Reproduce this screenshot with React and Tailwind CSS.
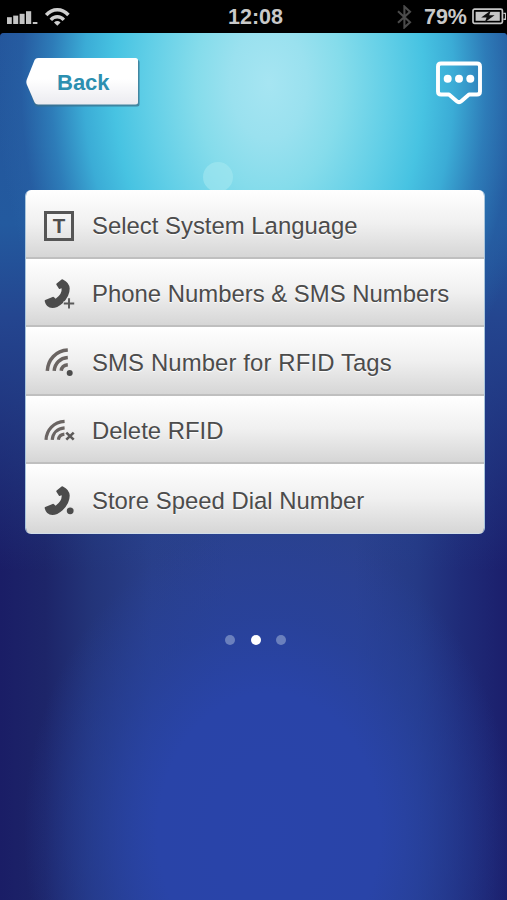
const HANDSET =
  "M17.6 0.4 L12.6 4.4 Q12 5 12.4 5.8 L14.8 9.4 Q15.4 10.2 16.2 9.8 L17.6 9.2 Q18.4 14.8 11.6 19.8 L10 18.2 Q9.4 17.5 8.6 17.9 L1.2 21.1 Q0.4 21.5 0.8 22.5 Q2.2 28.8 8.4 29.1 Q13 29.1 18.6 24.2 Q25.8 17.4 25.7 9.6 Q25.3 3.4 18.9 0.5 Q18.2 0 17.6 0.4 Z";

function LanguageIcon() {
  return (
    <div className="flex size-[30px] items-center justify-center border-[3px] border-[#555] pt-px text-[20.5px] leading-none font-bold text-[#4f4f4f]">
      T
    </div>
  );
}

function PhonePlusIcon() {
  return (
    <svg className="size-[30px] overflow-visible" viewBox="0 0 30 30">
      <path d={HANDSET} fill="#4c4c4c" />
      <path d="M25 18.8v11.4M19.3 24.5h11.2" stroke="#e4e4e4" strokeWidth="4" />
      <path d="M25 19.2v10.4M19.8 24.5h10.4" stroke="#5a5a5a" strokeWidth="1.9" />
    </svg>
  );
}

function PhoneDotIcon() {
  return (
    <svg className="size-[30px] overflow-visible" viewBox="0 0 30 30">
      <path d={HANDSET} fill="#4c4c4c" />
      <circle cx="26.2" cy="24.8" r="4.4" fill="#e4e4e4" />
      <circle cx="26.2" cy="24.8" r="3.4" fill="#4c4c4c" />
    </svg>
  );
}

function TagIcon() {
  return (
    <svg className="size-[30px] overflow-visible" viewBox="0 0 30 30" fill="none">
      <g stroke="#6a6462" strokeWidth="3.5">
        <path d="M3.3 24.8C4 13.6 11.8 4.6 23.8 4" />
        <path d="M10.2 24.8C10.8 17 16.2 12 23.8 11.4" />
        <path d="M17.2 24.8C17.6 21.4 20 19.2 23.8 18.8" />
      </g>
      <circle cx="25.7" cy="26.9" r="3" fill="#4c4c4c" />
    </svg>
  );
}

function TagDeleteIcon() {
  return (
    <svg className="size-[30px] overflow-visible" viewBox="0 0 30 30" fill="none">
      <g stroke="#6a6462" strokeWidth="3.2">
        <path d="M2 23.8C2.6 14 9.6 6 20.6 5.4" />
        <path d="M8.2 23.8C8.8 17.4 13.2 12.4 20.6 11.8" />
        <path d="M14.4 23.8C14.8 20.8 16.8 18.6 20.4 18.2" />
      </g>
      <path d="M22.3 16.6l7.4 7M29.7 16.6l-7.4 7" stroke="#5c5a59" strokeWidth="2.6" />
    </svg>
  );
}

const ITEMS = [
  { label: "Select System Language", Icon: LanguageIcon, row: "h-[69px] pt-[21px]", text: "pt-px" },
  { label: "Phone Numbers & SMS Numbers", Icon: PhonePlusIcon, row: "h-[68px] pt-[20px]", text: "pt-px" },
  { label: "SMS Number for RFID Tags", Icon: TagIcon, row: "h-[69px] pt-[19px]", text: "pt-[3px] tracking-[0.12px]" },
  { label: "Delete RFID", Icon: TagDeleteIcon, row: "h-[68px] pt-[20px]", text: "pt-px" },
  { label: "Store Speed Dial Number", Icon: PhoneDotIcon, row: "h-[70px] pt-[22px]", text: "pt-px" },
];

function StatusBar() {
  return (
    <header className="grid h-[33px] grid-cols-[1fr_auto_1fr] items-center bg-black text-[21.5px] leading-none font-bold text-[#c9c9c9]">
      <div className="flex items-center gap-[7px] pl-[7px]">
        <svg className="h-[17px] w-[31px]" viewBox="0 0 31 17" fill="#c4c4c4">
          <rect x="0" y="9.2" width="4.8" height="6.8" />
          <rect x="6.2" y="7.6" width="5" height="8.4" />
          <rect x="12.6" y="5.8" width="5" height="10.2" />
          <rect x="19" y="3.2" width="5.2" height="12.8" />
          <rect x="25.8" y="14" width="4.6" height="2" />
        </svg>
        <svg className="h-[18px] w-[25px]" viewBox="0 0 25 18" fill="none" stroke="#cfcfcf" strokeWidth="3.4">
          <path d="M1.2 7C7.4 0 17.2 0 23.4 7" />
          <path d="M5.8 11.8c3.6-4 9.4-4 13 0" />
          <path d="M12.3 17.8l-3.3-3.4q3.3-2.8 6.6 0z" fill="#cfcfcf" stroke="none" />
        </svg>
      </div>
      <div className="pt-[3px] pl-[4px]">12:08</div>
      <div className="flex items-center justify-end pr-px">
        <svg className="mr-[12px] h-[24px] w-[15px]" viewBox="0 0 15 24" fill="none" stroke="#4b4b4b" strokeWidth="2.1">
          <path d="M1 6.2l12 11-5.6 5.2V1.6L13 6.8 1 17.8" />
        </svg>
        <span className="pt-[3px]">79%</span>
        <svg className="ml-[5px] h-[17px] w-[34px]" viewBox="0 0 34 17">
          <rect x="1" y="1.2" width="29.4" height="14.2" rx="1.6" fill="none" stroke="#c6c6c6" strokeWidth="1.7" />
          <rect x="3.6" y="3.8" width="24.2" height="9" fill="#c6c6c6" />
          <path d="M31.4 5.4h2.2v5.8h-2.2" fill="none" stroke="#c6c6c6" strokeWidth="1.4" />
          <path d="M18.8 2.4L9.2 9.6h5.4l-1.8 4.6L22.6 7.2h-5.4z" fill="#111" />
        </svg>
      </div>
    </header>
  );
}

function BackButton() {
  return (
    <button className="relative flex h-[49px] w-[114px] items-start">
      <svg className="absolute inset-0 h-full w-full overflow-visible" viewBox="0 0 114 49">
        <defs>
          <linearGradient id="back" x1="0" y1="0" x2="0" y2="1">
            <stop offset="0.45" stopColor="#fff" />
            <stop offset="1" stopColor="#ebebf0" />
          </linearGradient>
        </defs>
        <path
          d="M12 2H111.5Q113.5 2 113.5 4V46Q113.5 48.5 111 48.5H12Q9.5 48.5 8.5 46.5L2 29z"
          fill="#3b6f8a"
          opacity="0.75"
        />
        <path
          d="M12 0H109.5Q112 0 112 2.5V44Q112 46.5 109.5 46.5H12Q9.6 46.5 8.6 44.6L.6 26Q0 24 .6 22L8.6 2Q9.6 0 12 0Z"
          fill="url(#back)"
        />
      </svg>
      <span className="relative pt-[12px] pl-[31px] text-[22px] leading-[25px] font-bold text-[#2c8fb0]">Back</span>
    </button>
  );
}

function Backdrop() {
  return (
    <div className="absolute inset-0 overflow-hidden rounded-t-[4px] bg-[linear-gradient(90deg,#1a1d66_0%,#1d2569_9%,#233479_18%,#293f8a_30%,#2b418f_45%,#2b418f_70%,#253a86_82%,#1f2b78_91%,#1b1f6c_100%)]">
      <div className="absolute inset-0 bg-[linear-gradient(180deg,#24569c_0%,#235a9f_22%,#24458f_33%,#25308600_62%)]" />
      <div className="absolute inset-0 bg-[radial-gradient(ellipse_245px_310px_at_53%_800px,#2944aa_0%,#2944a8_45%,#2742a099_70%,#24388c00_100%)]" />
      <div className="absolute inset-0 bg-[radial-gradient(ellipse_272px_400px_at_53%_50px,#a6e5f2_0%,#9ae1ef_14%,#85dceb_27%,#62cfe7_44%,#47c3e2_57%,#3bacd6_68%,#3085bfcc_80%,#2862a680_91%,#24569c00_100%)]" />
      {/* lens flare */}
      <div className="absolute top-[129px] left-[203px] size-[30px] rounded-full bg-[#a8e9f0]/55" />
    </div>
  );
}

export default function App() {
  return (
    <div className="flex h-[900px] w-full flex-col overflow-hidden bg-black font-['Liberation_Sans',Arial,sans-serif]">
      <StatusBar />
      <main className="relative flex flex-1 flex-col">
        <Backdrop />

        <div className="relative flex h-[157px] items-start justify-between pt-[25px] pr-[24px] pl-[26px]">
          <BackButton />
          <svg className="mt-[2px] h-[46px] w-[48px]" viewBox="0 0 48 46" fill="none">
            <path
              d="M6 3.5H42Q45 3.5 45 6.5V31.5Q45 34.5 42 34.5H34L26.5 41Q24 43.2 21.5 41L14 34.5H6Q3 34.5 3 31.5V6.5Q3 3.5 6 3.5Z"
              stroke="#fff"
              strokeWidth="3.9"
              strokeLinejoin="round"
            />
            <circle cx="12.7" cy="18.8" r="4" fill="#fff" />
            <circle cx="24" cy="18.8" r="4" fill="#fff" />
            <circle cx="35.3" cy="18.8" r="4" fill="#fff" />
          </svg>
        </div>

        <ul className="relative mr-[22px] ml-[25px] overflow-hidden rounded-[6px] border-x border-[#a9c6dd]">
          {ITEMS.map(({ label, Icon, row, text }) => (
            <li
              key={label}
              className={`flex items-start border-b-[2.5px] border-[#bfbfbf] bg-linear-to-b from-white via-[#f0f0f0] to-[#d6d6d6] pl-[18px] last:border-b last:border-[#d0dce8] ${row}`}
            >
              <Icon />
              <span
                className={`pl-[18px] text-[23.9px] leading-[28px] whitespace-nowrap text-[#4c4c4c] [text-shadow:0_1px_1px_#fff] ${text}`}
              >
                {label}
              </span>
            </li>
          ))}
        </ul>

        <div className="relative flex justify-center gap-[15.5px] pt-[101px] pl-[4px]">
          <span className="size-[10px] rounded-full bg-[#6b80bd]" />
          <span className="size-[10px] rounded-full bg-white" />
          <span className="size-[10px] rounded-full bg-[#6b80bd]" />
        </div>
      </main>
    </div>
  );
}
